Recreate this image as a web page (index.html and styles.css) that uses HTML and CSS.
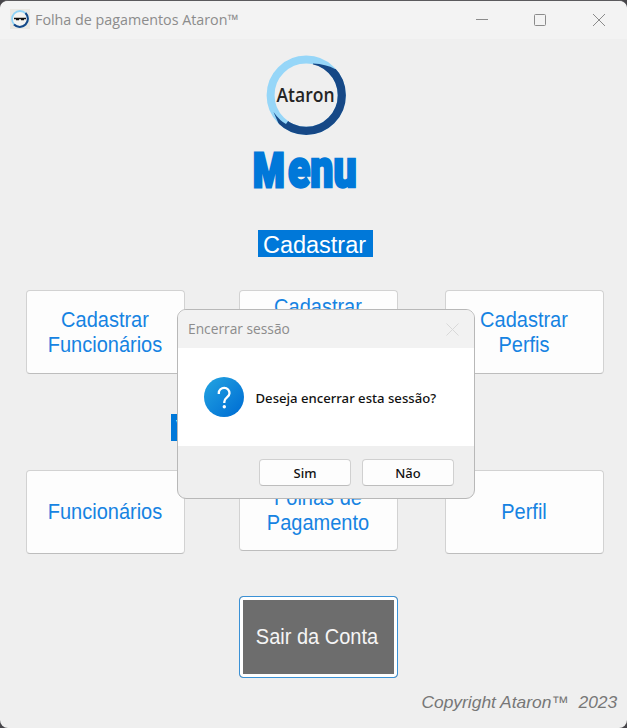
FILE: index.html
```html
<!DOCTYPE html>
<html lang="pt-BR">
<head>
<meta charset="utf-8">
<title>Folha de pagamentos Ataron™</title>
<link rel="stylesheet" href="styles.css">
</head>
<body>
<main class="window">
  <header class="titlebar">
    <svg class="app-icon" width="20" height="20" viewBox="0 0 20 20">
      <rect width="20" height="20" fill="#e9e8e3"/>
      <circle cx="10" cy="10" r="8" fill="#f4f4f1" stroke="#8fd3f7" stroke-width="1.800"/>
      <path d="M15.500 4A8 8 0 0 1 4 15.500" fill="none" stroke="#164886" stroke-width="2"/>
      <path d="M4 9.500h12M6 10.500h3M11 10.500h3" stroke="#111" stroke-width="1.300"/>
    </svg>
    <span class="app-title">Folha de pagamentos Ataron™</span>
    <svg class="controls" width="132" height="20" viewBox="0 0 132 20" fill="none" stroke="#8b8b8b">
      <path d="M1 10.500h12"/>
      <rect x="59.500" y="5.500" width="11" height="11" rx="1"/>
      <path d="M118 5l12 12M130 5l-12 12"/>
    </svg>
  </header>

  <section class="brand">
    <svg class="logo" width="80" height="80" viewBox="0 0 80 80">
      <defs><clipPath id="shade"><path d="M47 8.500Q60 9 69 14L90 10V90H13V69.500L7.500 57Q14 66 20 69L40 40Z"/></clipPath></defs>
      <circle cx="40.200" cy="40.200" r="35.600" fill="none" stroke="#96d6f8" stroke-width="8"/>
      <circle cx="40.200" cy="40.200" r="35.600" fill="none" stroke="#164886" stroke-width="8.200" clip-path="url(#shade)"/>
      <text x="10.500" y="47" class="logo-text" textLength="58" lengthAdjust="spacingAndGlyphs">Ataron</text>
    </svg>
    <h1 class="menu"><span class="menu-cap">M</span><span class="menu-low">enu</span></h1>
  </section>

  <h2 class="label label-create">Cadastrar</h2>
  <div class="row">
    <button class="tile"><span>Cadastrar<br>Funcionários</span></button>
    <button class="tile"><span>Cadastrar<br>Folhas de<br>Pagamento</span></button>
    <button class="tile"><span>Cadastrar<br>Perfis</span></button>
  </div>

  <h2 class="label label-view">Visualizar</h2>
  <div class="row">
    <button class="tile"><span>Funcionários</span></button>
    <button class="tile tile-short"><span>Folhas de<br>Pagamento</span></button>
    <button class="tile"><span>Perfil</span></button>
  </div>

  <button class="logout"><span>Sair da Conta</span></button>
  <footer class="copyright"><span>Copyright Ataron™&nbsp; 2023</span></footer>

  <div class="dialog" role="dialog">
    <div class="dialog-head">
      <span class="dialog-title">Encerrar sessão</span>
      <svg width="13" height="13" viewBox="0 0 13 13" stroke="#d9d9d9"><path d="M.5 .5l12 12M12.500 .5l-12 12"/></svg>
    </div>
    <div class="dialog-body">
      <svg width="40" height="40" viewBox="0 0 40 40">
        <defs><linearGradient id="blue" x1="0" y1="0" x2="1" y2="1"><stop offset=".1" stop-color="#209fe0"/><stop offset=".9" stop-color="#0070d4"/></linearGradient></defs>
        <circle cx="20" cy="20" r="20" fill="url(#blue)"/>
        <path d="M14.800 17V16A5.300 5.300 0 0 1 25.500 16.300C25.500 20.500 20.300 20.500 20.300 25V26" fill="none" stroke="#fff" stroke-width="2.300"/>
        <circle cx="20.300" cy="29.800" r="1.700" fill="#fff"/>
      </svg>
      <span class="question">Deseja encerrar esta sessão?</span>
    </div>
    <div class="dialog-foot">
      <button class="choice">Sim</button>
      <button class="choice">Não</button>
    </div>
  </div>
</main>
</body>
</html>
```
FILE: styles.css
```css
* { box-sizing: border-box; }
body { margin: 0; background: #47464a; font-family: "Liberation Sans", Arial, sans-serif; }
button { font: inherit; padding: 0; margin: 0; }
h1, h2 { margin: 0; font-weight: normal; }
svg { flex: none; }
.window { position: relative; height: 728px; overflow: hidden; background: #efefef; border-top: 1px solid #5b5a5d; border-radius: 8px; display: flex; flex-direction: column; }
.titlebar { height: 38px; flex: none; display: flex; align-items: center; padding: 0 20px 2px 10px; background: #f3f3f3; }
.app-title { margin-left: 5px; font: 14.500px/20px "Open Sans", sans-serif; color: #8c8c8c; white-space: nowrap; transform: translateY(1px) scaleX(.986); transform-origin: 0 50%; }
.controls { margin-left: auto; }
.brand { height: 191px; flex: none; display: flex; flex-direction: column; align-items: flex-start; padding: 16px 0 0 254px; }
.logo { margin-left: 12px; }
.logo-text { font: 600 20px "Open Sans", sans-serif; fill: #242424; }
.menu { display: flex; align-items: baseline; height: 60px; margin-top: 4px; color: #0078d9; font-family: Roboto, sans-serif; font-weight: 900; white-space: nowrap; }
.menu-cap { width: 34px; font-size: 48px; line-height: 60px; transform: translateX(-1px) scaleX(.75); transform-origin: 0 50%; -webkit-text-stroke: 3px #0078d9; }
.menu-low { font-size: 54px; line-height: 60px; letter-spacing: 0; transform: scaleX(.76); transform-origin: 0 50%; -webkit-text-stroke: 2.500px #0078d9; }
.label { flex: none; height: 27px; background: #0078d9; color: #fff; font-size: 23.500px; line-height: 30px; text-align: center; }
.label-create { width: 115px; margin-left: 258px; padding-right: 2px; }
.label-view { width: 288px; margin: 40px 0 0 171px; text-align: left; padding-left: 5px; }
.row { flex: none; display: grid; grid-template-columns: 159px 159px 159px; margin: 33px 0 0 26px; column-gap: 54px; height: 84px; }
.row .tile:nth-child(3) { margin-left: -7px; margin-right: 7px; }
.label-view + .row { margin-top: 29px; }
.tile { height: 84px; overflow: hidden; display: flex; align-items: center; justify-content: center; background: #fdfdfd; border: 1px solid #d2d2d2; border-bottom-color: #bdbdbd; border-radius: 4px; color: #1683e2; font-size: 20px; line-height: 23.400px; }
.tile span { transform: translate(-.5px, .5px) scaleY(1.080); }
.tile-short { height: 81px; }
.logout { flex: none; width: 159px; height: 82px; margin: 42px 0 0 239px; border: 1px solid #3a91d6; border-radius: 4px; background: #6d6d6d; box-shadow: inset 0 0 0 3px #fff; color: #f5f5f5; font-size: 20px; }
.logout span { display: inline-block; transform: translate(-1.500px, -1px) scaleY(1.080); }
.copyright { margin-top: 14px; padding-right: 10px; text-align: right; font-size: 17px; line-height: 22px; font-style: italic; color: #777; }
.copyright span { display: inline-block; transform: scaleX(1.024); transform-origin: 100% 50%; }
.dialog { position: absolute; left: 177px; top: 308px; width: 298px; height: 190px; border: 1px solid #b8b8b8; border-radius: 9px; overflow: hidden; background: #efefef; display: flex; flex-direction: column; }
.dialog-head { height: 38px; flex: none; display: flex; align-items: center; justify-content: space-between; padding: 0 15px 0 10px; background: #f2f2f2; }
.dialog-title { font: 14px/20px "Open Sans", sans-serif; color: #8c8c8c; transform: scaleX(.983); transform-origin: 0 50%; }
.dialog-body { height: 98px; flex: none; display: flex; align-items: center; gap: 11px; padding-left: 26px; background: #fff; }
.question { font: 500 13px/20px "Noto Sans", sans-serif; color: #111; white-space: nowrap; transform: translate(.5px, .5px) scaleX(1.010); transform-origin: 0 50%; }
.dialog-foot { display: flex; justify-content: flex-end; gap: 11px; padding: 13px 20px 0 0; }
.choice { width: 92px; height: 27px; border: 1px solid #d0d0d0; border-bottom-color: #bdbdbd; border-radius: 4px; background: #fdfdfd; color: #111; font: 500 13px/20px "Noto Sans", sans-serif; }
```
